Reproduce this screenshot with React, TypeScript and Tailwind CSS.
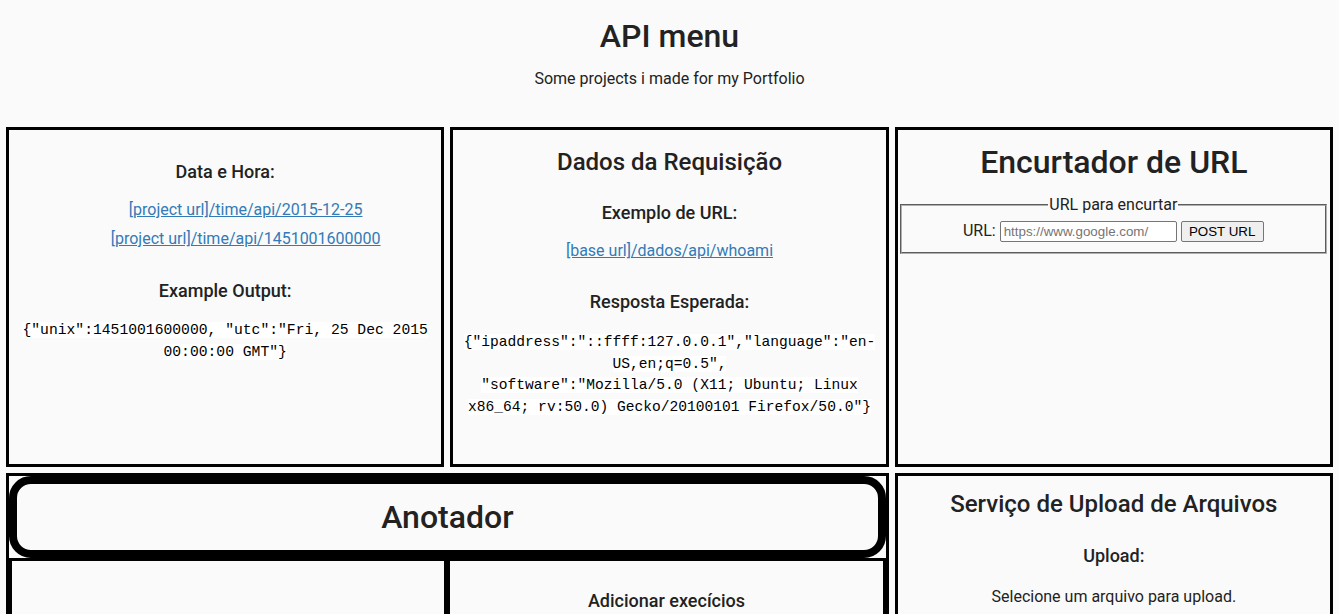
import React from "react";

const box = "border-[3px] border-black";
const link = "text-[#337ab7] underline";
const code = "bg-white";

export default function App() {
  return (
    <div className="min-h-screen bg-[#fafafa] text-[#222] font-['Roboto',sans-serif] overflow-hidden">
      {/* Header */}
      <header className="text-center pt-[17px]">
        <h1 className="text-[32px] leading-[38px] font-medium">API menu</h1>
        <p className="mt-[14px] text-[16px] leading-[20px]">Some projects i made for my Portfolio</p>
      </header>

      <main className="grid grid-cols-3 gap-[6px] px-[6px] mt-[38px]">
        {/* Data e Hora */}
        <section className={`${box} h-[340px] text-center px-[6px]`}>
          <h3 className="mt-[31px] text-[18px] leading-[22px] font-medium">Data e Hora:</h3>
          <div className="mt-[17px] text-[16px] leading-[20px] flex flex-col items-center gap-[9px]">
            <a href="#" className={`${link} pl-[41px]`}>[project url]/time/api/2015-12-25</a>
            <a href="#" className={`${link} pl-[41px]`}>[project url]/time/api/1451001600000</a>
          </div>
          <h3 className="mt-[31px] text-[18px] leading-[22px] font-medium">Example Output:</h3>
          <p className="mt-[17px] font-['DejaVu_Sans_Mono',monospace] text-[14.7px] leading-[20.5px] text-black">
            <code className={code}>{'{"unix":1451001600000, "utc":"Fri, 25 Dec 2015 00:00:00 GMT"}'}</code>
          </p>
        </section>

        {/* Dados da Requisição */}
        <section className={`${box} h-[340px] text-center px-[3px]`}>
          <h2 className="mt-[18px] text-[24px] leading-[28px] font-medium">Dados da Requisição</h2>
          <h3 className="mt-[26px] text-[18px] leading-[22px] font-medium">Exemplo de URL:</h3>
          <div className="mt-[17px] text-[16px] leading-[20px]">
            <a href="#" className={link}>[base url]/dados/api/whoami</a>
          </div>
          <h3 className="mt-[30px] text-[18px] leading-[22px] font-medium">Resposta Esperada:</h3>
          <p className="mt-[18px] font-['DejaVu_Sans_Mono',monospace] text-[14.6px] leading-[20.6px] text-black">
            <code className={code}>{'{"ipaddress":"::ffff:127.0.0.1","language":"en-US,en;q=0.5",'}</code>
            <br />
            <code className={code}>{'"software":"Mozilla/5.0 (X11; Ubuntu; Linux x86_64; rv:50.0) Gecko/20100101 Firefox/50.0"}'}</code>
          </p>
        </section>

        {/* Encurtador de URL */}
        <section className={`${box} h-[340px] text-center`}>
          <h1 className="mt-[13px] text-[32px] leading-[38px] font-medium">Encurtador de URL</h1>
          <fieldset className="mt-[14px] ml-[2px] mr-[3px] border-2 border-[#b0b0b0] [border-style:groove] px-[12px] pt-[5px] pb-[9px]">
            <legend className="mx-auto px-[1px] text-[16px] leading-[19px]">URL para encurtar</legend>
            <form className="flex items-center justify-center gap-[4px] text-[16px]" onSubmit={(e) => e.preventDefault()}>
              <label>URL:</label>
              <input
                type="text"
                placeholder="https://www.google.com/"
                className="w-[177px] h-[21px] border border-[#767676] rounded-[2px] bg-white px-[3px] font-['Liberation_Sans',sans-serif] text-[13.33px] placeholder:text-[#757575]"
              />
              <button
                type="submit"
                className="w-[83px] h-[21px] border border-[#767676] rounded-[2px] bg-[#efefef] font-['Liberation_Sans',sans-serif] text-[13.33px] text-black"
              >
                POST URL
              </button>
            </form>
          </fieldset>
        </section>

        {/* Anotador */}
        <section className={`${box} col-span-2`}>
          <div className="border-8 border-black rounded-[22px] py-[14px] text-center">
            <h1 className="text-[32px] leading-[38px] font-medium">Anotador</h1>
          </div>
          <div className="grid grid-cols-2">
            <div className={`${box} h-[320px]`}></div>
            <div className={`${box} h-[320px] text-center`}>
              <h3 className="mt-[29px] text-[18px] leading-[22px] font-medium">Adicionar execícios</h3>
            </div>
          </div>
        </section>

        {/* Upload */}
        <section className={`${box} h-[400px] text-center`}>
          <h2 className="mt-[14px] text-[24px] leading-[28px] font-medium">Serviço de Upload de Arquivos</h2>
          <h3 className="mt-[27px] text-[18px] leading-[22px] font-medium">Upload:</h3>
          <p className="mt-[20px] text-[16px] leading-[20px]">Selecione um arquivo para upload.</p>
        </section>
      </main>
    </div>
  );
}
